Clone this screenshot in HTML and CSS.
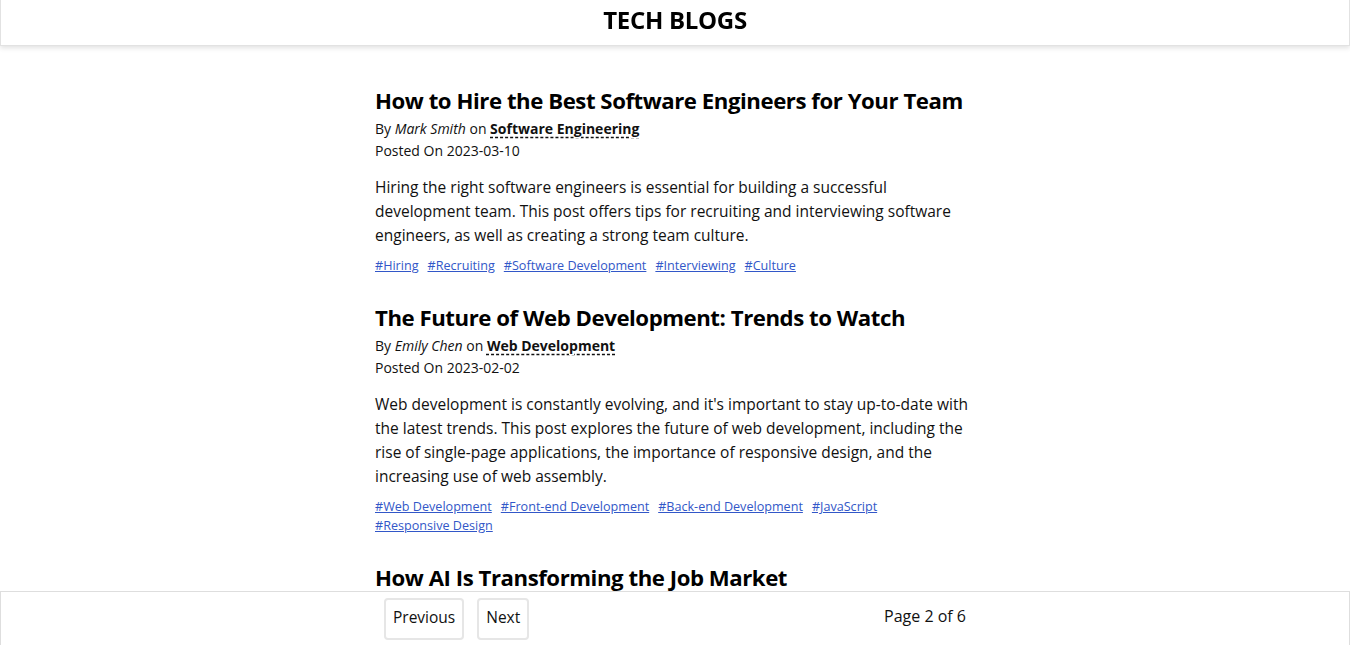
FILE: index.html
```html
<!DOCTYPE html>
<html lang="en">
<head>
<meta charset="utf-8">
<title>Tech Blogs</title>
<link rel="stylesheet" href="styles.css">
</head>
<body>
<header class="site-header">
  <h1 class="site-title">TECH BLOGS</h1>
</header>
<main class="container">
  <article class="post">
    <h2 class="post-title">How to Hire the Best Software Engineers for Your Team</h2>
    <div class="meta">By <em>Mark Smith</em> on <a class="category" href="#">Software Engineering</a></div>
    <div class="date">Posted On 2023-03-10</div>
    <p class="excerpt">Hiring the right software engineers is essential for building a successful development team. This post offers tips for recruiting and interviewing software engineers, as well as creating a strong team culture.</p>
    <div class="tags">
      <a href="#">#Hiring</a><a href="#">#Recruiting</a><a href="#">#Software Development</a><a href="#">#Interviewing</a><a href="#">#Culture</a>
    </div>
  </article>
  <article class="post">
    <h2 class="post-title">The Future of Web Development: Trends to Watch</h2>
    <div class="meta">By <em>Emily Chen</em> on <a class="category" href="#">Web Development</a></div>
    <div class="date">Posted On 2023-02-02</div>
    <p class="excerpt">Web development is constantly evolving, and it's important to stay up-to-date with the latest trends. This post explores the future of web development, including the rise of single-page applications, the importance of responsive design, and the increasing use of web assembly.</p>
    <div class="tags">
      <a href="#">#Web Development</a><a href="#">#Front-end Development</a><a href="#">#Back-end Development</a><a href="#">#JavaScript</a><a href="#">#Responsive Design</a>
    </div>
  </article>
  <article class="post">
    <h2 class="post-title">How AI Is Transforming the Job Market</h2>
    <div class="meta">By <em>David Lee</em> on <a class="category" href="#">Artificial Intelligence</a></div>
    <div class="date">Posted On 2023-01-15</div>
    <p class="excerpt">Artificial intelligence is changing the way we work and the skills employers look for.</p>
  </article>
</main>
<footer class="pager">
  <div class="pager-inner">
    <div class="pager-buttons">
      <button class="pager-btn" type="button">Previous</button>
      <button class="pager-btn" type="button">Next</button>
    </div>
    <span class="page-info">Page 2 of 6</span>
  </div>
</footer>
</body>
</html>
```

FILE: styles.css
```css
* { box-sizing: border-box; }

html, body {
  margin: 0;
  padding: 0;
  background: #fff;
}

body {
  font-family: "Open Sans", "Noto Sans", sans-serif;
  color: #111;
}

.site-header {
  position: fixed;
  top: 0;
  left: 0;
  right: 0;
  height: 46px;
  padding-bottom: 7px;
  background: #fff;
  border: 1px solid #e2e2e2;
  border-top: none;
  box-shadow: 0 2px 5px rgba(0, 0, 0, 0.12);
  display: flex;
  align-items: center;
  justify-content: center;
  z-index: 2;
}

.site-title {
  margin: 0;
  font-size: 24px;
  font-weight: 700;
  letter-spacing: -0.3px;
  color: #000;
}

.container {
  width: 600px;
  margin: 0 auto;
  padding: 86px 0 80px;
}

.post {
  margin-bottom: 28px;
}

.post-title {
  margin: 0 0 2px;
  font-size: 22.2px;
  line-height: 30px;
  font-weight: 700;
  letter-spacing: -0.45px;
  color: #000;
}

.meta, .date {
  font-size: 14px;
  line-height: 22px;
}

.meta em {
  font-style: italic;
}

.category {
  color: #111;
  font-weight: 700;
  text-decoration: underline dashed;
  text-underline-offset: 3px;
}

.excerpt {
  margin: 13px 0 9px;
  font-size: 15.5px;
  line-height: 24px;
}

.tags {
  display: flex;
  flex-wrap: wrap;
  column-gap: 9px;
  font-size: 12.6px;
  line-height: 19px;
}

.tags a {
  color: #3257c8;
}

.pager {
  position: fixed;
  left: 0;
  right: 0;
  bottom: 0;
  height: 54px;
  background: #fff;
  border: 1px solid #dedede;
  border-bottom: none;
  z-index: 2;
}

.pager-inner {
  width: 600px;
  height: 100%;
  margin: 0 auto;
  padding: 0 9px;
  display: flex;
  align-items: center;
  justify-content: space-between;
}

.pager-buttons {
  display: flex;
  gap: 13px;
}

.pager-btn {
  font-family: inherit;
  font-size: 15.5px;
  color: #111;
  background: #fff;
  border: 2px solid #e6e6e6;
  border-radius: 4px;
  height: 42px;
  padding: 0 7px 4px;
}

.page-info {
  font-size: 16px;
  padding-bottom: 5px;
}
```
